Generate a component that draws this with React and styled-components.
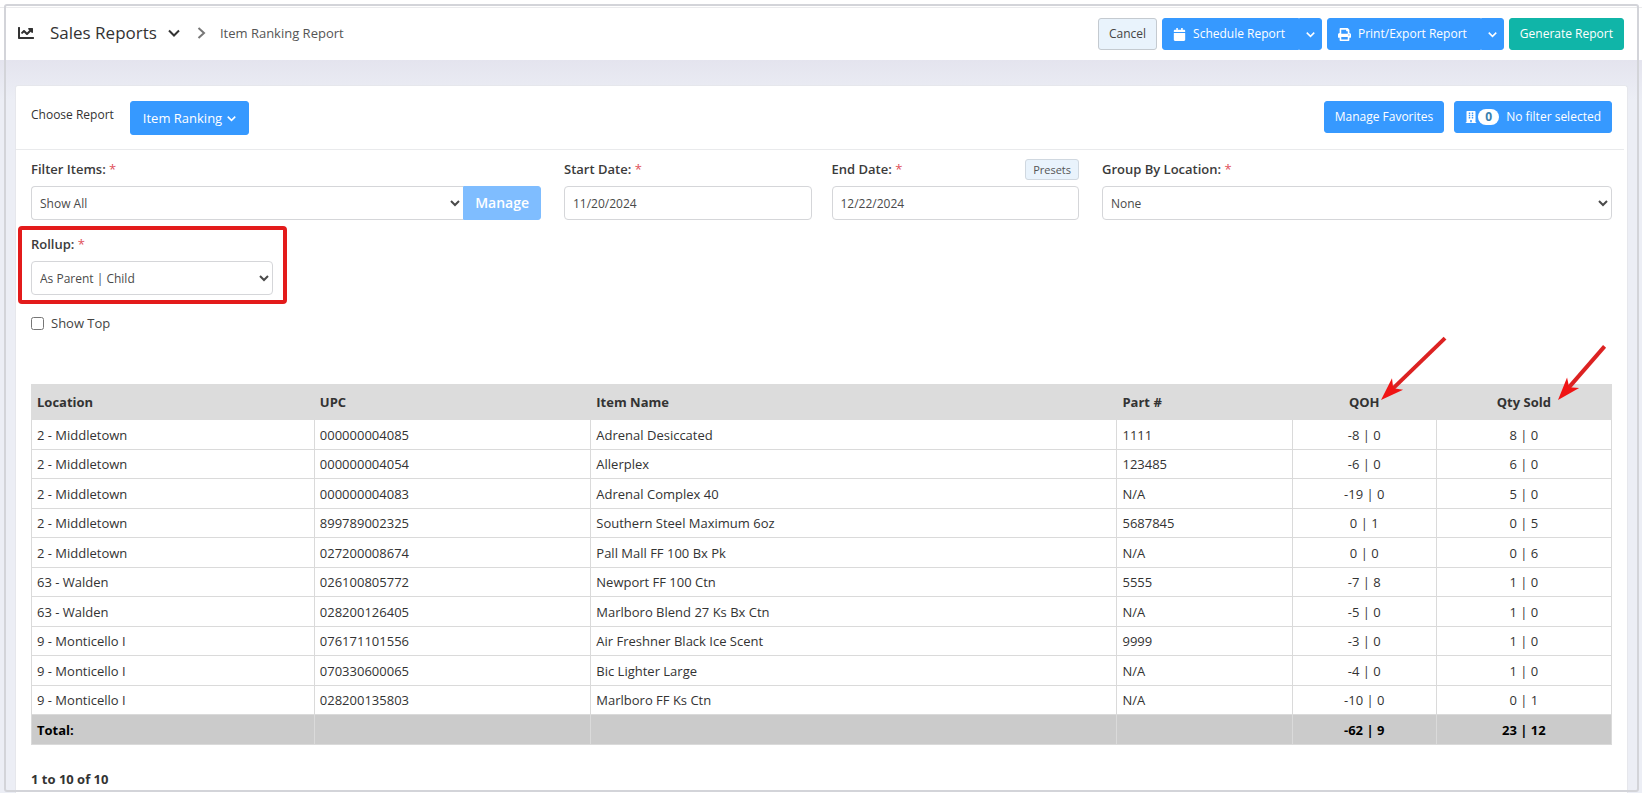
import React from "react";
import styled, { createGlobalStyle } from "styled-components";
import { FaCalendar, FaPrint, FaBuilding, FaChartLine } from "react-icons/fa";

const GlobalStyle = createGlobalStyle`
  *, *::before, *::after { box-sizing: border-box; }
  body {
    margin: 0;
    background: #eceef5;
    color: #333;
    font-family: "Open Sans", "Noto Sans", sans-serif;
    font-size: 13px;
    line-height: 20px;
  }
  button, input, select { font: inherit; }
`;

const Page = styled.div`
  display: flex;
  flex-direction: column;
  height: 100vh;
  padding-top: 7px;
  overflow: hidden;
  background: #fff;
`;

const Frame = styled.div`
  position: fixed;
  inset: 4px 3px 1px 4px;
  border: 2px solid #d3d4d9;
  border-radius: 3px;
  pointer-events: none;
`;

const Header = styled.header`
  flex: none;
  display: flex;
  align-items: center;
  justify-content: space-between;
  height: 53px;
  padding: 0 18px 0 18px;
  border-top: 1px solid #ebebed;
  background: #fff;
`;

const Crumbs = styled.nav`
  display: flex;
  align-items: center;
  padding-bottom: 2px;
`;

const Title = styled.h1`
  margin: 0 11px 0 16px;
  font-size: 17px;
  font-weight: 400;
  line-height: 24px;
`;

const Separator = styled.span`
  display: flex;
  margin: 0 14px 0 17px;
`;

const CrumbLink = styled.a`
  color: #555;
  text-decoration: none;
`;

const Actions = styled.div`
  display: flex;
  gap: ${(p) => p.$gap}px;
`;

const Button = styled.button`
  display: flex;
  align-items: center;
  justify-content: center;
  height: ${(p) => (p.$tall ? 34 : 32)}px;
  padding: 0 ${(p) => (p.$tall ? 12 : 10)}px;
  border: 1px solid ${(p) => p.$border || "#3699ff"};
  border-radius: 3px;
  background: ${(p) => p.$bg || "#3699ff"};
  color: ${(p) => p.$color || "#fff"};
  font-size: ${(p) => p.$size || 12}px;
  white-space: nowrap;
  cursor: pointer;
`;

const ReportButton = styled(Button)`
  gap: 5px;
`;

const Split = styled.div`
  display: flex;

  ${Button}:first-child {
    gap: 7px;
    border-radius: 3px 0 0 3px;
    padding-right: 13px;
  }
  ${Button}:first-child svg {
    width: auto;
    height: 13px;
  }
  ${Button}:last-child {
    border-radius: 0 3px 3px 0;
    padding: 0 6px;
  }
`;

const Main = styled.main`
  flex: 1;
  display: flex;
  padding: 25px 14px 0 15px;
  background: linear-gradient(#e4e4ee, #eceef5 40px);
`;

const Card = styled.section`
  flex: 1;
  min-width: 0;
  border: 1px solid #e6e7ec;
  border-bottom: 0;
  border-radius: 3px 3px 0 0;
  background: #fff;
`;

const Chooser = styled.div`
  display: flex;
  justify-content: space-between;
  height: 64px;
  padding: 15px 12px 0 15px;
  margin-right: 3px;
  border-bottom: 1px solid #e9eaec;
`;

const ChooserLeft = styled.div`
  display: flex;
  gap: 16px;
  font-size: 12px;
  line-height: 28px;
`;

const CountBadge = styled.span`
  padding: 0 7px;
  margin: 0 7px 0 1px;
  border-radius: 8px;
  background: #fff;
  color: #3a7fae;
  font-weight: 700;
  line-height: 16px;
`;

const Body = styled.div`
  padding: 9px 15px 0;
`;

const Fields = styled.div`
  display: grid;
  grid-template-columns: 510fr 515fr 510fr;
  gap: 23px;
`;

const Dates = styled.div`
  display: grid;
  grid-template-columns: 1fr 1fr;
  gap: 20px;
`;

const Field = styled.div`
  min-width: 0;
`;

const LabelRow = styled.div`
  display: flex;
  align-items: flex-start;
  justify-content: space-between;
  height: 27px;
`;

const Label = styled.label`
  font-weight: 600;
  color: #3b3b3b;

  span { color: #e0505a; font-weight: 400; }
`;

const PresetsButton = styled(Button)`
  height: 21px;
  padding: 0 7px;
  font-size: 11px;
`;

const control = `
  width: 100%;
  min-width: 0;
  height: 34px;
  border: 1px solid #d5d6d9;
  border-radius: 4px;
  background: #fff;
  color: #4a4a4a;
`;

const Select = styled.select`
  ${control}
  padding: 0 4px;
  font-size: 12px;
`;

const Input = styled.input`
  ${control}
  padding: 0 8px;
  font-size: 12px;
`;

const InputGroup = styled.div`
  display: flex;

  ${Select} { border-radius: 4px 0 0 4px; border-right: 0; }
  ${Button} { border-radius: 0 3px 3px 0; padding: 0 11px; font-weight: 600; }
`;

const RollupField = styled.div`
  position: relative;
  width: 242px;
  margin-top: 14px;

  &::after {
    content: "";
    position: absolute;
    inset: -8px -14px -9px -13px;
    border: 4px solid #e31b1b;
    border-radius: 4px;
    pointer-events: none;
  }
`;

const CheckLabel = styled.label`
  display: flex;
  align-items: center;
  gap: 7px;
  margin: 18px 0 51px;
  color: #444;

  input { width: 13px; height: 13px; margin: 0; }
`;

const Table = styled.table`
  width: 100%;
  border-collapse: collapse;
  table-layout: fixed;

  th, td {
    padding: 0 5px;
    text-align: left;
    border: 1px solid #dadada;
  }
  th:nth-child(n + 5), td:nth-child(n + 5) { text-align: center; }

  thead tr { height: 35px; background: #dcdcdc; }
  thead th { border-color: #dcdcdc; }
  tbody tr { height: 29px; }
  tbody tr:nth-child(odd) { height: 30px; }
  tfoot tr { height: 30px; background: #cbcbcb; color: #000; }
  tfoot td { font-weight: 700; }
`;

const Marked = styled.span`
  position: relative;
`;

const Arrow = styled.svg`
  position: absolute;
  bottom: 11px;
  left: 100%;
  overflow: visible;
`;

const Summary = styled.p`
  margin: 24px 0 0;
  font-weight: 700;
`;

const Chevron = ({ size = 9, stroke = 2 }) => (
  <svg width={size} height={size} viewBox="0 0 12 12" fill="none" stroke="currentColor" strokeWidth={stroke}>
    <path d="M1 3.500 6 8.500 11 3.500" />
  </svg>
);

const arrowShapes = {
  long: { w: 66, h: 63, length: 89, angle: -44 },
  short: { w: 56, h: 55, length: 71, angle: -49 },
};

const RedArrow = ({ kind, offset }) => {
  const { w, h, length, angle } = arrowShapes[kind];
  return (
    <Arrow width={w} height={h} viewBox={`0 0 ${w} ${h}`} aria-hidden="true">
      <g transform={`translate(${offset} ${h}) rotate(${angle})`}>
        <path d={`M15 0H${length}`} stroke="#dc2222" strokeWidth="4" />
        <path d="M0 0 23 -8 17 0 23 8Z" fill="#f01414" />
      </g>
    </Arrow>
  );
};

const FieldLabel = ({ id, children }) => (
  <Label htmlFor={id}>
    {children} <span>*</span>
  </Label>
);

const columns = [
  { name: "Location", width: 17.9 },
  { name: "UPC", width: 17.5 },
  { name: "Item Name", width: 33.3 },
  { name: "Part #", width: 11.1 },
  { name: "QOH", width: 9.1, arrow: "long", offset: 1 },
  { name: "Qty Sold", width: 11.1, arrow: "short", offset: 7 },
];

const rows = [
  ["2 - Middletown", "000000004085", "Adrenal Desiccated", "1111", "-8 | 0", "8 | 0"],
  ["2 - Middletown", "000000004054", "Allerplex", "123485", "-6 | 0", "6 | 0"],
  ["2 - Middletown", "000000004083", "Adrenal Complex 40", "N/A", "-19 | 0", "5 | 0"],
  ["2 - Middletown", "899789002325", "Southern Steel Maximum 6oz", "5687845", "0 | 1", "0 | 5"],
  ["2 - Middletown", "027200008674", "Pall Mall FF 100 Bx Pk", "N/A", "0 | 0", "0 | 6"],
  ["63 - Walden", "026100805772", "Newport FF 100 Ctn", "5555", "-7 | 8", "1 | 0"],
  ["63 - Walden", "028200126405", "Marlboro Blend 27 Ks Bx Ctn", "N/A", "-5 | 0", "1 | 0"],
  ["9 - Monticello I", "076171101556", "Air Freshner Black Ice Scent", "9999", "-3 | 0", "1 | 0"],
  ["9 - Monticello I", "070330600065", "Bic Lighter Large", "N/A", "-4 | 0", "1 | 0"],
  ["9 - Monticello I", "028200135803", "Marlboro FF Ks Ctn", "N/A", "-10 | 0", "0 | 1"],
];

const totals = ["Total:", "", "", "", "-62 | 9", "23 | 12"];

export default function App() {
  return (
    <Page>
      <GlobalStyle />
      <Header>
        <Crumbs aria-label="Breadcrumb">
          <FaChartLine size={16} />
          <Title>Sales Reports</Title>
          <Chevron size={12} />
          <Separator>
            <svg width="9" height="12" viewBox="0 0 9 12" fill="none" stroke="#777" strokeWidth="2">
              <path d="M1.500 1 7 6 1.500 11" />
            </svg>
          </Separator>
          <CrumbLink href="#item-ranking">Item Ranking Report</CrumbLink>
        </Crumbs>
        <Actions $gap={5}>
          <Button type="button" $bg="#e9f3fc" $border="#c4cad0" $color="#444">Cancel</Button>
          <Split>
            <Button type="button"><FaCalendar />Schedule Report</Button>
            <Button type="button" aria-label="Schedule options"><Chevron /></Button>
          </Split>
          <Split>
            <Button type="button"><FaPrint />Print/Export Report</Button>
            <Button type="button" aria-label="Export options"><Chevron /></Button>
          </Split>
          <Button type="button" $bg="#10b5a8" $border="#10b5a8">Generate Report</Button>
        </Actions>
      </Header>
      <Main>
        <Card>
          <Chooser>
            <ChooserLeft>
              <span>Choose Report</span>
              <ReportButton type="button" $tall $size={13}>Item Ranking<Chevron /></ReportButton>
            </ChooserLeft>
            <Actions $gap={10}>
              <Button type="button">Manage Favorites</Button>
              <Button type="button">
                <FaBuilding size={12} />
                <CountBadge>0</CountBadge>
                No filter selected
              </Button>
            </Actions>
          </Chooser>
          <Body>
            <Fields>
              <Field>
                <LabelRow><FieldLabel id="items">Filter Items:</FieldLabel></LabelRow>
                <InputGroup>
                  <Select id="items"><option>Show All</option></Select>
                  <Button type="button" $tall $size={14} $bg="#7fbdff" $border="#7fbdff">Manage</Button>
                </InputGroup>
              </Field>
              <Dates>
                <Field>
                  <LabelRow><FieldLabel id="start">Start Date:</FieldLabel></LabelRow>
                  <Input id="start" defaultValue="11/20/2024" />
                </Field>
                <Field>
                  <LabelRow>
                    <FieldLabel id="end">End Date:</FieldLabel>
                    <PresetsButton type="button" $bg="#e9f3fc" $border="#d0d8e0" $color="#555">Presets</PresetsButton>
                  </LabelRow>
                  <Input id="end" defaultValue="12/22/2024" />
                </Field>
              </Dates>
              <Field>
                <LabelRow><FieldLabel id="group">Group By Location:</FieldLabel></LabelRow>
                <Select id="group"><option>None</option></Select>
              </Field>
            </Fields>
            <RollupField>
              <LabelRow><FieldLabel id="rollup">Rollup:</FieldLabel></LabelRow>
              <Select id="rollup"><option>As Parent | Child</option></Select>
            </RollupField>
            <CheckLabel>
              <input type="checkbox" />
              Show Top
            </CheckLabel>
            <Table>
              <colgroup>
                {columns.map((c) => <col key={c.name} width={`${c.width}%`} />)}
              </colgroup>
              <thead>
                <tr>
                  {columns.map((c) => (
                    <th key={c.name} scope="col">
                      <Marked>
                        {c.name}
                        {c.arrow && <RedArrow kind={c.arrow} offset={c.offset} />}
                      </Marked>
                    </th>
                  ))}
                </tr>
              </thead>
              <tbody>
                {rows.map((row) => (
                  <tr key={row[1]}>{row.map((cell, i) => <td key={i}>{cell}</td>)}</tr>
                ))}
              </tbody>
              <tfoot>
                <tr>{totals.map((cell, i) => <td key={i}>{cell}</td>)}</tr>
              </tfoot>
            </Table>
            <Summary>1 to 10 of 10</Summary>
          </Body>
        </Card>
      </Main>
      <Frame />
    </Page>
  );
}
